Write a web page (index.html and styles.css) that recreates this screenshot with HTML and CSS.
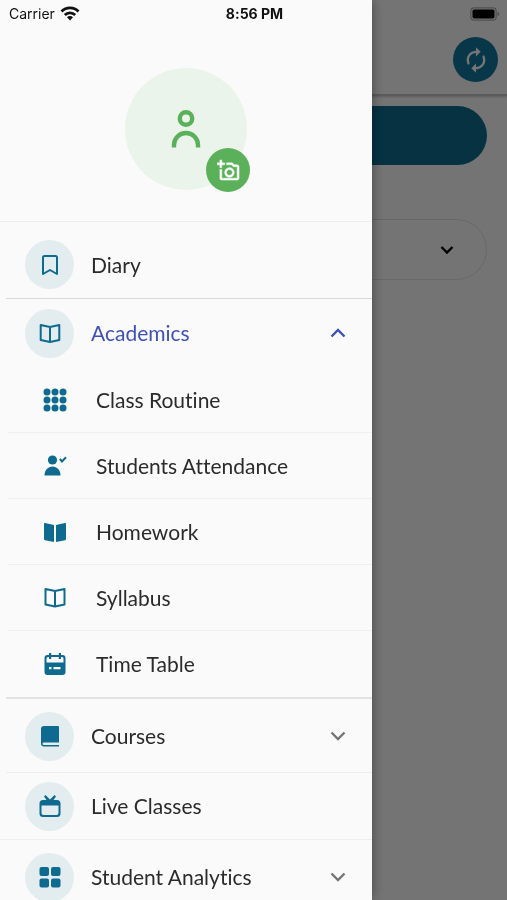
FILE: index.html
```html
<!DOCTYPE html>
<html lang="en">
<head>
<meta charset="utf-8">
<meta name="viewport" content="width=device-width, initial-scale=1">
<title>Menu</title>
<link rel="stylesheet" href="styles.css">
</head>
<body>
<main class="page">
  <header class="appbar">
    <button class="refresh" aria-label="Refresh">
      <svg width="28" height="28" viewBox="0 0 24 24" fill="currentColor"><path d="M12 6v3l4-4-4-4v3c-4.42 0-8 3.58-8 8 0 1.57.46 3.03 1.24 4.26L6.7 14.8A5.87 5.87 0 0 1 6 12c0-3.31 2.69-6 6-6zm6.76 1.74L17.3 9.2c.44.84.7 1.79.7 2.8 0 3.31-2.69 6-6 6v-3l-4 4 4 4v-3c4.42 0 8-3.58 8-8 0-1.57-.46-3.03-1.24-4.26z"/></svg>
    </button>
  </header>
  <div class="content">
    <button class="pill" aria-label="Open"></button>
    <div class="picker">
      <select aria-label="Select"><option></option></select>
      <svg class="picker-arrow" width="14" height="10" viewBox="0 0 14 10" fill="none" stroke="currentColor" stroke-width="2.4"><path d="M1.5 2 7 7.500 12.500 2"/></svg>
    </div>
  </div>
</main>
<div class="scrim"></div>
<aside class="drawer">
  <header class="profile">
    <div class="avatar">
      <svg width="32" height="40" viewBox="0 0 32 40" fill="none" stroke="currentColor" stroke-width="4.400"><circle cx="16" cy="9.500" r="6.200"/><path d="M4 38.500V36a12 12 0 0 1 24 0v2.500"/></svg>
      <button class="camera" aria-label="Add photo">
        <svg width="23" height="23" viewBox="0 0 24 24" fill="currentColor" stroke="currentColor" stroke-width=".5"><path d="M21 6h-3.170L16 4h-6v2h5.120l1.830 2H21v12H5v-9H3v9c0 1.100.9 2 2 2h16c1.100 0 2-.9 2-2V8c0-1.100-.9-2-2-2zM8 14c0 2.760 2.240 5 5 5s5-2.240 5-5-2.240-5-5-5-5 2.240-5 5zm5-3c1.650 0 3 1.350 3 3s-1.350 3-3 3-3-1.350-3-3 1.350-3 3-3zM5 6h3V4H5V1H3v3H0v2h3v3h2z"/></svg>
      </button>
    </div>
  </header>
  <nav class="menu">
    <a class="row line-strong" href="#">
      <span class="badge"><svg width="24" height="24" viewBox="0 0 24 24" fill="none" stroke="currentColor" stroke-width="2" stroke-linejoin="round"><path d="M5 21V4.500A1.500 1.500 0 0 1 6.500 3h11A1.500 1.500 0 0 1 19 4.500V21l-7-4z"/></svg></span>
      <span>Diary</span>
    </a>
    <section class="group">
      <button class="row active" aria-expanded="true">
        <span class="badge"><svg width="24" height="24" viewBox="0 0 24 24" fill="none" stroke="currentColor" stroke-width="2" stroke-linejoin="round"><path d="M12 6 2.700 4v15l9.300 2 9.300-2V4zv15"/></svg></span>
        <span>Academics</span>
        <svg class="chevron" width="16" height="10" viewBox="0 0 16 10" fill="none" stroke="currentColor" stroke-width="2.400"><path d="M1.500 8.500 8 2l6.500 6.500"/></svg>
      </button>
      <a class="subrow" href="#">
        <svg width="24" height="24" viewBox="0 0 24 24" fill="currentColor"><circle cx="4" cy="4" r="3.500"/><circle cx="12" cy="4" r="3.500"/><circle cx="20" cy="4" r="3.500"/><circle cx="4" cy="12" r="3.500"/><circle cx="12" cy="12" r="3.500"/><circle cx="20" cy="12" r="3.500"/><circle cx="4" cy="20" r="3.500"/><circle cx="12" cy="20" r="3.500"/><circle cx="20" cy="20" r="3.500"/></svg>
        <span>Class Routine</span>
      </a>
      <a class="subrow" href="#">
        <svg width="24" height="24" viewBox="0 0 24 24" fill="currentColor"><circle cx="9.500" cy="6" r="4.600"/><path d="M1.500 21.500C1.500 16 5 12.500 9.500 12.500S17.500 16 17.500 21.500z"/><path d="m16.800 5 2.200 2.500 4-4.200" fill="none" stroke="currentColor" stroke-width="2"/></svg>
        <span>Students Attendance</span>
      </a>
      <a class="subrow" href="#">
        <svg width="24" height="24" viewBox="0 0 24 24" fill="currentColor"><path d="M2 3q-1-.1-1 1v15q0 1 1 1.200l9 1.800V5zM22 3q1-.1 1 1v15q0 1-1 1.200L13 22V5z"/></svg>
        <span>Homework</span>
      </a>
      <a class="subrow" href="#">
        <svg width="24" height="24" viewBox="0 0 24 24" fill="none" stroke="currentColor" stroke-width="2" stroke-linejoin="round"><path d="M12 5 2.500 3v15.500L12 20.500l9.500-2V3zv15.500"/></svg>
        <span>Syllabus</span>
      </a>
      <a class="subrow" href="#">
        <svg width="24" height="24" viewBox="0 0 24 24" fill="currentColor"><path fill-rule="evenodd" d="M6 1h2.200v2h7.600V1H18v2h1.500q3 0 3 3v14q0 3-3 3h-15q-3 0-3-3V6q0-3 3-3H6zM3.500 10.500h17V6.500Q20.500 5 19 5h-1v2h-2.200V5H8.200v2H6V5H5Q3.500 5 3.500 6.500zM6 15v2.200h2.500V15zm4.500 0v2.200h7V15z"/></svg>
        <span>Time Table</span>
      </a>
    </section>
    <button class="row tall line" aria-expanded="false">
      <span class="badge"><svg width="24" height="24" viewBox="0 0 24 24" fill="currentColor"><path fill-rule="evenodd" d="M6 2h14q1 0 1 1v15.500h-1V21h1v1.500H6q-3 0-3-3V5q0-3 3-3zm0 16.500q-1.500 0-1.500 1.200T6 21h14v-2.500z"/></svg></span>
      <span>Courses</span>
      <svg class="chevron" width="16" height="10" viewBox="0 0 16 10" fill="none" stroke="currentColor" stroke-width="2.400"><path d="M1.500 1.500 8 8l6.500-6.500"/></svg>
    </button>
    <a class="row short line-full" href="#">
      <span class="badge"><svg width="24" height="24" viewBox="0 0 24 24" fill="currentColor"><path fill-rule="evenodd" d="M5 6h3.500L6 2.500 7.500 1 12 5.500 16.500 1 18 2.500 15.500 6H19q3.500 0 3.500 3.500v10Q22.500 23 19 23H5q-3.500 0-3.500-3.500v-10Q1.500 6 5 6zm-1.500 5.500V19q0 2 2 2h13q2 0 2-2v-7.500z"/></svg></span>
      <span>Live Classes</span>
    </a>
    <button class="row tall" aria-expanded="false">
      <span class="badge"><svg width="24" height="24" viewBox="0 0 24 24" fill="currentColor"><rect x="1.500" y="2" width="9.500" height="9" rx="2"/><rect x="13" y="2" width="9.500" height="9" rx="2"/><rect x="1.500" y="13.500" width="9.500" height="9" rx="2"/><rect x="13" y="13.500" width="9.500" height="9" rx="2"/></svg></span>
      <span>Student Analytics</span>
      <svg class="chevron" width="16" height="10" viewBox="0 0 16 10" fill="none" stroke="currentColor" stroke-width="2.400"><path d="M1.500 1.500 8 8l6.500-6.500"/></svg>
    </button>
  </nav>
</aside>
<div class="status">
  <span class="carrier">Carrier
    <svg width="20" height="15" viewBox="0 0 20 15" fill="none" stroke="currentColor" stroke-width="2.800"><path d="M1.500 5.500a12 12 0 0 1 17 0M4.800 9a7.400 7.400 0 0 1 10.400 0"/><path d="M7 11.200a4.200 4.200 0 0 1 6 0L10 14.500z" fill="currentColor" stroke="none"/></svg>
  </span>
  <span class="time">8:56 PM</span>
  <svg class="battery" width="30" height="14" viewBox="0 0 30 14"><rect x=".8" y=".8" width="25.400" height="12.400" rx="3.500" fill="none" stroke="#505050" stroke-width="1.200"/><rect x="2.500" y="2.500" width="22" height="9" rx="1.800"/><path d="M27.500 4.800q2 .8 2 2.200t-2 2.200z" fill="#505050"/></svg>
</div>
</body>
</html>
```

FILE: styles.css
```css
* {
  box-sizing: border-box;
}

body {
  margin: 0;
  height: 100vh;
  overflow: hidden;
  background: #fcfcfc;
  color: #2b2b2b;
  font-family: Lato, "Open Sans", sans-serif;
  font-variant-ligatures: none;
}

button {
  border: 0;
  padding: 0;
  background: none;
  color: inherit;
  font: inherit;
  font-variant-ligatures: none;
  text-align: left;
}

a {
  color: inherit;
  text-decoration: none;
}

svg {
  display: block;
  flex: none;
}

.appbar {
  display: flex;
  justify-content: flex-end;
  padding: 37px 9px 12px;
  border-bottom: 2px solid #c4c8c9;
  box-shadow: 0 1px 2px #cccccc;
}

.refresh {
  display: grid;
  place-items: center;
  width: 45px;
  height: 45px;
  border-radius: 50%;
  background: #12799f;
  color: #ffffff;
}

.content {
  display: flex;
  flex-direction: column;
  gap: 54px;
  padding: 10px 20px;
}

.pill {
  height: 59px;
  border-radius: 30px;
  background: #0e6d91;
}

.picker {
  position: relative;
}

.picker select {
  appearance: none;
  display: block;
  width: 100%;
  height: 61px;
  border: 1px solid #e2e2e2;
  border-radius: 31px;
  background: transparent;
}

.picker-arrow {
  position: absolute;
  top: 26px;
  right: 33px;
  color: #000000;
}

.scrim {
  position: fixed;
  inset: 0;
  background: rgba(0, 0, 0, 0.54);
}

.drawer {
  position: fixed;
  inset: 0 auto 0 0;
  width: 73.4%;
  overflow: hidden;
  background: #fafafa;
  box-shadow: 0 0 12px rgba(0, 0, 0, 0.4);
}

.profile {
  display: flex;
  justify-content: center;
  padding: 68px 0 31px;
  border-bottom: 1px solid #eeeeee;
}

.avatar {
  position: relative;
  display: grid;
  place-items: center;
  width: 122px;
  height: 122px;
  border-radius: 50%;
  background: #eaf4ea;
  color: #5bb05a;
}

.camera {
  position: absolute;
  right: -3px;
  bottom: -2px;
  display: grid;
  place-items: center;
  width: 44px;
  height: 44px;
  border-radius: 50%;
  background: #5bb05a;
  color: #ffffff;
}

.menu {
  padding-top: 8px;
  font-size: 21px;
  line-height: 24px;
}

.row {
  display: flex;
  align-items: center;
  gap: 17px;
  width: 100%;
  height: 68px;
  padding: 0 26px 0 25px;
}

.tall {
  height: 74px;
}

.short {
  height: 67px;
}

.line,
.line-strong,
.group {
  background: linear-gradient(#eeeeee, #eeeeee) 6px 100% / 100% 1px no-repeat;
}

.line-strong {
  height: 69px;
  background-image: linear-gradient(#d8d8d8, #d8d8d8);
}

.group {
  padding-bottom: 2px;
  background-image: linear-gradient(#e2e2e2, #e2e2e2);
  background-size: 100% 2px;
}

.line-full {
  border-bottom: 1px solid #eeeeee;
}

.active {
  color: #3f51b5;
}

.badge {
  display: grid;
  place-items: center;
  width: 49px;
  height: 49px;
  border-radius: 50%;
  background: #e3ecef;
  color: #0e6b8f;
}

.chevron {
  margin-left: auto;
  color: #757575;
}

.active .chevron {
  color: #3f51b5;
}

.subrow {
  display: flex;
  align-items: center;
  gap: 29px;
  height: 66px;
  margin-left: 8px;
  padding-left: 35px;
  border-bottom: 1px solid #f0f0f0;
}

.subrow:last-child {
  border-bottom: 0;
}

.subrow svg {
  color: #0e6b8f;
}

.status {
  position: fixed;
  inset: 0 0 auto;
  display: grid;
  grid-template-columns: 1fr auto 1fr;
  align-items: center;
  height: 27px;
  padding: 0 7px 0 9px;
  color: #111111;
  font-family: Inter, sans-serif;
  font-size: 14px;
}

.carrier {
  display: flex;
  align-items: center;
  gap: 5px;
}

.time {
  font-weight: 700;
}

.battery {
  justify-self: end;
}
```
